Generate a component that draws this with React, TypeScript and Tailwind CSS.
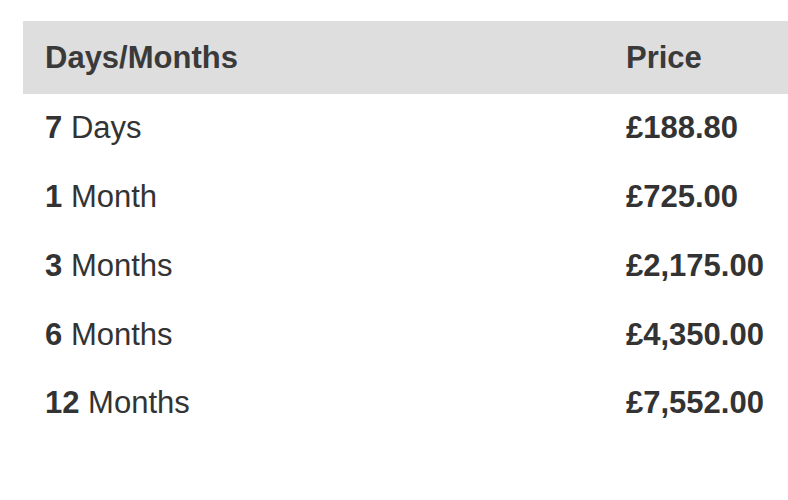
import React from "react";

const rows = [
  { n: "7", unit: "Days", price: "£188.80" },
  { n: "1", unit: "Month", price: "£725.00" },
  { n: "3", unit: "Months", price: "£2,175.00" },
  { n: "6", unit: "Months", price: "£4,350.00" },
  { n: "12", unit: "Months", price: "£7,552.00" },
];

export default function App() {
  return (
    <div className="w-[788px] h-[500px] bg-white overflow-hidden pt-[21px] pl-[23px] text-[#333333] font-['Liberation_Sans',Arial,sans-serif]">
      <div className="w-[765px]">
        <div className="flex items-center h-[73px] bg-[#dedede] pl-[22px] pb-[1px] text-[31px] font-bold text-[#3a3a3a] leading-none">
          <div className="w-[581px] shrink-0">Days/Months</div>
          <div>Price</div>
        </div>
        {rows.map((r) => (
          <div
            key={r.n}
            className="flex items-center h-[68.75px] pl-[22px] pb-[1px] text-[31px] leading-none"
          >
            <div className="w-[581px] shrink-0">
              <span className="font-bold">{r.n}</span> {r.unit}
            </div>
            <div className="font-bold">{r.price}</div>
          </div>
        ))}
      </div>
    </div>
  );
}
